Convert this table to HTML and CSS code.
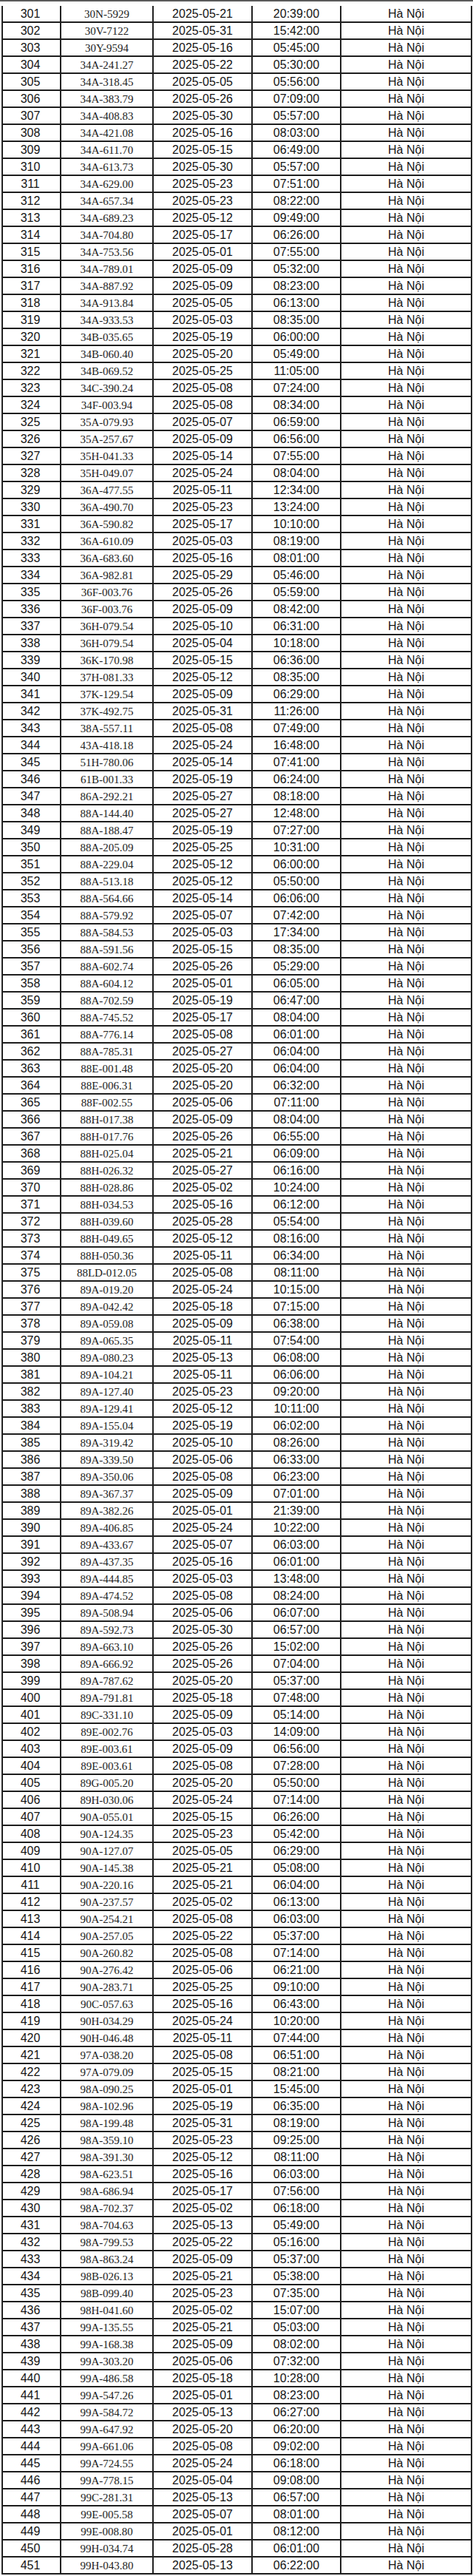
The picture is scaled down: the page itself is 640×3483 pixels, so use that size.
FILE: index.html
```html
<!DOCTYPE html>
<html lang="vi">
<head>
<meta charset="utf-8">
<title>Danh sách phương tiện</title>
<link rel="stylesheet" href="styles.css">
</head>
<body>
<div class="topbar"></div>
<div class="sheet">
<div class="row"><span class="c num">301</span><span class="c plate">30N-5929</span><span class="c">2025-05-21</span><span class="c">20:39:00</span><span class="c city">Hà Nội</span></div>
<div class="row"><span class="c num">302</span><span class="c plate">30V-7122</span><span class="c">2025-05-31</span><span class="c">15:42:00</span><span class="c city">Hà Nội</span></div>
<div class="row"><span class="c num">303</span><span class="c plate">30Y-9594</span><span class="c">2025-05-16</span><span class="c">05:45:00</span><span class="c city">Hà Nội</span></div>
<div class="row"><span class="c num">304</span><span class="c plate">34A-241.27</span><span class="c">2025-05-22</span><span class="c">05:30:00</span><span class="c city">Hà Nội</span></div>
<div class="row"><span class="c num">305</span><span class="c plate">34A-318.45</span><span class="c">2025-05-05</span><span class="c">05:56:00</span><span class="c city">Hà Nội</span></div>
<div class="row"><span class="c num">306</span><span class="c plate">34A-383.79</span><span class="c">2025-05-26</span><span class="c">07:09:00</span><span class="c city">Hà Nội</span></div>
<div class="row"><span class="c num">307</span><span class="c plate">34A-408.83</span><span class="c">2025-05-30</span><span class="c">05:57:00</span><span class="c city">Hà Nội</span></div>
<div class="row"><span class="c num">308</span><span class="c plate">34A-421.08</span><span class="c">2025-05-16</span><span class="c">08:03:00</span><span class="c city">Hà Nội</span></div>
<div class="row"><span class="c num">309</span><span class="c plate">34A-611.70</span><span class="c">2025-05-15</span><span class="c">06:49:00</span><span class="c city">Hà Nội</span></div>
<div class="row"><span class="c num">310</span><span class="c plate">34A-613.73</span><span class="c">2025-05-30</span><span class="c">05:57:00</span><span class="c city">Hà Nội</span></div>
<div class="row"><span class="c num">311</span><span class="c plate">34A-629.00</span><span class="c">2025-05-23</span><span class="c">07:51:00</span><span class="c city">Hà Nội</span></div>
<div class="row"><span class="c num">312</span><span class="c plate">34A-657.34</span><span class="c">2025-05-23</span><span class="c">08:22:00</span><span class="c city">Hà Nội</span></div>
<div class="row"><span class="c num">313</span><span class="c plate">34A-689.23</span><span class="c">2025-05-12</span><span class="c">09:49:00</span><span class="c city">Hà Nội</span></div>
<div class="row"><span class="c num">314</span><span class="c plate">34A-704.80</span><span class="c">2025-05-17</span><span class="c">06:26:00</span><span class="c city">Hà Nội</span></div>
<div class="row"><span class="c num">315</span><span class="c plate">34A-753.56</span><span class="c">2025-05-01</span><span class="c">07:55:00</span><span class="c city">Hà Nội</span></div>
<div class="row"><span class="c num">316</span><span class="c plate">34A-789.01</span><span class="c">2025-05-09</span><span class="c">05:32:00</span><span class="c city">Hà Nội</span></div>
<div class="row"><span class="c num">317</span><span class="c plate">34A-887.92</span><span class="c">2025-05-09</span><span class="c">08:23:00</span><span class="c city">Hà Nội</span></div>
<div class="row"><span class="c num">318</span><span class="c plate">34A-913.84</span><span class="c">2025-05-05</span><span class="c">06:13:00</span><span class="c city">Hà Nội</span></div>
<div class="row"><span class="c num">319</span><span class="c plate">34A-933.53</span><span class="c">2025-05-03</span><span class="c">08:35:00</span><span class="c city">Hà Nội</span></div>
<div class="row"><span class="c num">320</span><span class="c plate">34B-035.65</span><span class="c">2025-05-19</span><span class="c">06:00:00</span><span class="c city">Hà Nội</span></div>
<div class="row"><span class="c num">321</span><span class="c plate">34B-060.40</span><span class="c">2025-05-20</span><span class="c">05:49:00</span><span class="c city">Hà Nội</span></div>
<div class="row"><span class="c num">322</span><span class="c plate">34B-069.52</span><span class="c">2025-05-25</span><span class="c">11:05:00</span><span class="c city">Hà Nội</span></div>
<div class="row"><span class="c num">323</span><span class="c plate">34C-390.24</span><span class="c">2025-05-08</span><span class="c">07:24:00</span><span class="c city">Hà Nội</span></div>
<div class="row"><span class="c num">324</span><span class="c plate">34F-003.94</span><span class="c">2025-05-08</span><span class="c">08:34:00</span><span class="c city">Hà Nội</span></div>
<div class="row"><span class="c num">325</span><span class="c plate">35A-079.93</span><span class="c">2025-05-07</span><span class="c">06:59:00</span><span class="c city">Hà Nội</span></div>
<div class="row"><span class="c num">326</span><span class="c plate">35A-257.67</span><span class="c">2025-05-09</span><span class="c">06:56:00</span><span class="c city">Hà Nội</span></div>
<div class="row"><span class="c num">327</span><span class="c plate">35H-041.33</span><span class="c">2025-05-14</span><span class="c">07:55:00</span><span class="c city">Hà Nội</span></div>
<div class="row"><span class="c num">328</span><span class="c plate">35H-049.07</span><span class="c">2025-05-24</span><span class="c">08:04:00</span><span class="c city">Hà Nội</span></div>
<div class="row"><span class="c num">329</span><span class="c plate">36A-477.55</span><span class="c">2025-05-11</span><span class="c">12:34:00</span><span class="c city">Hà Nội</span></div>
<div class="row"><span class="c num">330</span><span class="c plate">36A-490.70</span><span class="c">2025-05-23</span><span class="c">13:24:00</span><span class="c city">Hà Nội</span></div>
<div class="row"><span class="c num">331</span><span class="c plate">36A-590.82</span><span class="c">2025-05-17</span><span class="c">10:10:00</span><span class="c city">Hà Nội</span></div>
<div class="row"><span class="c num">332</span><span class="c plate">36A-610.09</span><span class="c">2025-05-03</span><span class="c">08:19:00</span><span class="c city">Hà Nội</span></div>
<div class="row"><span class="c num">333</span><span class="c plate">36A-683.60</span><span class="c">2025-05-16</span><span class="c">08:01:00</span><span class="c city">Hà Nội</span></div>
<div class="row"><span class="c num">334</span><span class="c plate">36A-982.81</span><span class="c">2025-05-29</span><span class="c">05:46:00</span><span class="c city">Hà Nội</span></div>
<div class="row"><span class="c num">335</span><span class="c plate">36F-003.76</span><span class="c">2025-05-26</span><span class="c">05:59:00</span><span class="c city">Hà Nội</span></div>
<div class="row"><span class="c num">336</span><span class="c plate">36F-003.76</span><span class="c">2025-05-09</span><span class="c">08:42:00</span><span class="c city">Hà Nội</span></div>
<div class="row"><span class="c num">337</span><span class="c plate">36H-079.54</span><span class="c">2025-05-10</span><span class="c">06:31:00</span><span class="c city">Hà Nội</span></div>
<div class="row"><span class="c num">338</span><span class="c plate">36H-079.54</span><span class="c">2025-05-04</span><span class="c">10:18:00</span><span class="c city">Hà Nội</span></div>
<div class="row"><span class="c num">339</span><span class="c plate">36K-170.98</span><span class="c">2025-05-15</span><span class="c">06:36:00</span><span class="c city">Hà Nội</span></div>
<div class="row"><span class="c num">340</span><span class="c plate">37H-081.33</span><span class="c">2025-05-12</span><span class="c">08:35:00</span><span class="c city">Hà Nội</span></div>
<div class="row"><span class="c num">341</span><span class="c plate">37K-129.54</span><span class="c">2025-05-09</span><span class="c">06:29:00</span><span class="c city">Hà Nội</span></div>
<div class="row"><span class="c num">342</span><span class="c plate">37K-492.75</span><span class="c">2025-05-31</span><span class="c">11:26:00</span><span class="c city">Hà Nội</span></div>
<div class="row"><span class="c num">343</span><span class="c plate">38A-557.11</span><span class="c">2025-05-08</span><span class="c">07:49:00</span><span class="c city">Hà Nội</span></div>
<div class="row"><span class="c num">344</span><span class="c plate">43A-418.18</span><span class="c">2025-05-24</span><span class="c">16:48:00</span><span class="c city">Hà Nội</span></div>
<div class="row"><span class="c num">345</span><span class="c plate">51H-780.06</span><span class="c">2025-05-14</span><span class="c">07:41:00</span><span class="c city">Hà Nội</span></div>
<div class="row"><span class="c num">346</span><span class="c plate">61B-001.33</span><span class="c">2025-05-19</span><span class="c">06:24:00</span><span class="c city">Hà Nội</span></div>
<div class="row"><span class="c num">347</span><span class="c plate">86A-292.21</span><span class="c">2025-05-27</span><span class="c">08:18:00</span><span class="c city">Hà Nội</span></div>
<div class="row"><span class="c num">348</span><span class="c plate">88A-144.40</span><span class="c">2025-05-27</span><span class="c">12:48:00</span><span class="c city">Hà Nội</span></div>
<div class="row"><span class="c num">349</span><span class="c plate">88A-188.47</span><span class="c">2025-05-19</span><span class="c">07:27:00</span><span class="c city">Hà Nội</span></div>
<div class="row"><span class="c num">350</span><span class="c plate">88A-205.09</span><span class="c">2025-05-25</span><span class="c">10:31:00</span><span class="c city">Hà Nội</span></div>
<div class="row"><span class="c num">351</span><span class="c plate">88A-229.04</span><span class="c">2025-05-12</span><span class="c">06:00:00</span><span class="c city">Hà Nội</span></div>
<div class="row"><span class="c num">352</span><span class="c plate">88A-513.18</span><span class="c">2025-05-12</span><span class="c">05:50:00</span><span class="c city">Hà Nội</span></div>
<div class="row"><span class="c num">353</span><span class="c plate">88A-564.66</span><span class="c">2025-05-14</span><span class="c">06:06:00</span><span class="c city">Hà Nội</span></div>
<div class="row"><span class="c num">354</span><span class="c plate">88A-579.92</span><span class="c">2025-05-07</span><span class="c">07:42:00</span><span class="c city">Hà Nội</span></div>
<div class="row"><span class="c num">355</span><span class="c plate">88A-584.53</span><span class="c">2025-05-03</span><span class="c">17:34:00</span><span class="c city">Hà Nội</span></div>
<div class="row"><span class="c num">356</span><span class="c plate">88A-591.56</span><span class="c">2025-05-15</span><span class="c">08:35:00</span><span class="c city">Hà Nội</span></div>
<div class="row"><span class="c num">357</span><span class="c plate">88A-602.74</span><span class="c">2025-05-26</span><span class="c">05:29:00</span><span class="c city">Hà Nội</span></div>
<div class="row"><span class="c num">358</span><span class="c plate">88A-604.12</span><span class="c">2025-05-01</span><span class="c">06:05:00</span><span class="c city">Hà Nội</span></div>
<div class="row"><span class="c num">359</span><span class="c plate">88A-702.59</span><span class="c">2025-05-19</span><span class="c">06:47:00</span><span class="c city">Hà Nội</span></div>
<div class="row"><span class="c num">360</span><span class="c plate">88A-745.52</span><span class="c">2025-05-17</span><span class="c">08:04:00</span><span class="c city">Hà Nội</span></div>
<div class="row"><span class="c num">361</span><span class="c plate">88A-776.14</span><span class="c">2025-05-08</span><span class="c">06:01:00</span><span class="c city">Hà Nội</span></div>
<div class="row"><span class="c num">362</span><span class="c plate">88A-785.31</span><span class="c">2025-05-27</span><span class="c">06:04:00</span><span class="c city">Hà Nội</span></div>
<div class="row"><span class="c num">363</span><span class="c plate">88E-001.48</span><span class="c">2025-05-20</span><span class="c">06:04:00</span><span class="c city">Hà Nội</span></div>
<div class="row"><span class="c num">364</span><span class="c plate">88E-006.31</span><span class="c">2025-05-20</span><span class="c">06:32:00</span><span class="c city">Hà Nội</span></div>
<div class="row"><span class="c num">365</span><span class="c plate">88F-002.55</span><span class="c">2025-05-06</span><span class="c">07:11:00</span><span class="c city">Hà Nội</span></div>
<div class="row"><span class="c num">366</span><span class="c plate">88H-017.38</span><span class="c">2025-05-09</span><span class="c">08:04:00</span><span class="c city">Hà Nội</span></div>
<div class="row"><span class="c num">367</span><span class="c plate">88H-017.76</span><span class="c">2025-05-26</span><span class="c">06:55:00</span><span class="c city">Hà Nội</span></div>
<div class="row"><span class="c num">368</span><span class="c plate">88H-025.04</span><span class="c">2025-05-21</span><span class="c">06:09:00</span><span class="c city">Hà Nội</span></div>
<div class="row"><span class="c num">369</span><span class="c plate">88H-026.32</span><span class="c">2025-05-27</span><span class="c">06:16:00</span><span class="c city">Hà Nội</span></div>
<div class="row"><span class="c num">370</span><span class="c plate">88H-028.86</span><span class="c">2025-05-02</span><span class="c">10:24:00</span><span class="c city">Hà Nội</span></div>
<div class="row"><span class="c num">371</span><span class="c plate">88H-034.53</span><span class="c">2025-05-16</span><span class="c">06:12:00</span><span class="c city">Hà Nội</span></div>
<div class="row"><span class="c num">372</span><span class="c plate">88H-039.60</span><span class="c">2025-05-28</span><span class="c">05:54:00</span><span class="c city">Hà Nội</span></div>
<div class="row"><span class="c num">373</span><span class="c plate">88H-049.65</span><span class="c">2025-05-12</span><span class="c">08:16:00</span><span class="c city">Hà Nội</span></div>
<div class="row"><span class="c num">374</span><span class="c plate">88H-050.36</span><span class="c">2025-05-11</span><span class="c">06:34:00</span><span class="c city">Hà Nội</span></div>
<div class="row"><span class="c num">375</span><span class="c plate">88LD-012.05</span><span class="c">2025-05-08</span><span class="c">08:11:00</span><span class="c city">Hà Nội</span></div>
<div class="row"><span class="c num">376</span><span class="c plate">89A-019.20</span><span class="c">2025-05-24</span><span class="c">10:15:00</span><span class="c city">Hà Nội</span></div>
<div class="row"><span class="c num">377</span><span class="c plate">89A-042.42</span><span class="c">2025-05-18</span><span class="c">07:15:00</span><span class="c city">Hà Nội</span></div>
<div class="row"><span class="c num">378</span><span class="c plate">89A-059.08</span><span class="c">2025-05-09</span><span class="c">06:38:00</span><span class="c city">Hà Nội</span></div>
<div class="row"><span class="c num">379</span><span class="c plate">89A-065.35</span><span class="c">2025-05-11</span><span class="c">07:54:00</span><span class="c city">Hà Nội</span></div>
<div class="row"><span class="c num">380</span><span class="c plate">89A-080.23</span><span class="c">2025-05-13</span><span class="c">06:08:00</span><span class="c city">Hà Nội</span></div>
<div class="row"><span class="c num">381</span><span class="c plate">89A-104.21</span><span class="c">2025-05-11</span><span class="c">06:06:00</span><span class="c city">Hà Nội</span></div>
<div class="row"><span class="c num">382</span><span class="c plate">89A-127.40</span><span class="c">2025-05-23</span><span class="c">09:20:00</span><span class="c city">Hà Nội</span></div>
<div class="row"><span class="c num">383</span><span class="c plate">89A-129.41</span><span class="c">2025-05-12</span><span class="c">10:11:00</span><span class="c city">Hà Nội</span></div>
<div class="row"><span class="c num">384</span><span class="c plate">89A-155.04</span><span class="c">2025-05-19</span><span class="c">06:02:00</span><span class="c city">Hà Nội</span></div>
<div class="row"><span class="c num">385</span><span class="c plate">89A-319.42</span><span class="c">2025-05-10</span><span class="c">08:26:00</span><span class="c city">Hà Nội</span></div>
<div class="row"><span class="c num">386</span><span class="c plate">89A-339.50</span><span class="c">2025-05-06</span><span class="c">06:33:00</span><span class="c city">Hà Nội</span></div>
<div class="row"><span class="c num">387</span><span class="c plate">89A-350.06</span><span class="c">2025-05-08</span><span class="c">06:23:00</span><span class="c city">Hà Nội</span></div>
<div class="row"><span class="c num">388</span><span class="c plate">89A-367.37</span><span class="c">2025-05-09</span><span class="c">07:01:00</span><span class="c city">Hà Nội</span></div>
<div class="row"><span class="c num">389</span><span class="c plate">89A-382.26</span><span class="c">2025-05-01</span><span class="c">21:39:00</span><span class="c city">Hà Nội</span></div>
<div class="row"><span class="c num">390</span><span class="c plate">89A-406.85</span><span class="c">2025-05-24</span><span class="c">10:22:00</span><span class="c city">Hà Nội</span></div>
<div class="row"><span class="c num">391</span><span class="c plate">89A-433.67</span><span class="c">2025-05-07</span><span class="c">06:03:00</span><span class="c city">Hà Nội</span></div>
<div class="row"><span class="c num">392</span><span class="c plate">89A-437.35</span><span class="c">2025-05-16</span><span class="c">06:01:00</span><span class="c city">Hà Nội</span></div>
<div class="row"><span class="c num">393</span><span class="c plate">89A-444.85</span><span class="c">2025-05-03</span><span class="c">13:48:00</span><span class="c city">Hà Nội</span></div>
<div class="row"><span class="c num">394</span><span class="c plate">89A-474.52</span><span class="c">2025-05-08</span><span class="c">08:24:00</span><span class="c city">Hà Nội</span></div>
<div class="row"><span class="c num">395</span><span class="c plate">89A-508.94</span><span class="c">2025-05-06</span><span class="c">06:07:00</span><span class="c city">Hà Nội</span></div>
<div class="row"><span class="c num">396</span><span class="c plate">89A-592.73</span><span class="c">2025-05-30</span><span class="c">06:57:00</span><span class="c city">Hà Nội</span></div>
<div class="row"><span class="c num">397</span><span class="c plate">89A-663.10</span><span class="c">2025-05-26</span><span class="c">15:02:00</span><span class="c city">Hà Nội</span></div>
<div class="row"><span class="c num">398</span><span class="c plate">89A-666.92</span><span class="c">2025-05-26</span><span class="c">07:04:00</span><span class="c city">Hà Nội</span></div>
<div class="row"><span class="c num">399</span><span class="c plate">89A-787.62</span><span class="c">2025-05-20</span><span class="c">05:37:00</span><span class="c city">Hà Nội</span></div>
<div class="row"><span class="c num">400</span><span class="c plate">89A-791.81</span><span class="c">2025-05-18</span><span class="c">07:48:00</span><span class="c city">Hà Nội</span></div>
<div class="row"><span class="c num">401</span><span class="c plate">89C-331.10</span><span class="c">2025-05-09</span><span class="c">05:14:00</span><span class="c city">Hà Nội</span></div>
<div class="row"><span class="c num">402</span><span class="c plate">89E-002.76</span><span class="c">2025-05-03</span><span class="c">14:09:00</span><span class="c city">Hà Nội</span></div>
<div class="row"><span class="c num">403</span><span class="c plate">89E-003.61</span><span class="c">2025-05-09</span><span class="c">06:56:00</span><span class="c city">Hà Nội</span></div>
<div class="row"><span class="c num">404</span><span class="c plate">89E-003.61</span><span class="c">2025-05-08</span><span class="c">07:28:00</span><span class="c city">Hà Nội</span></div>
<div class="row"><span class="c num">405</span><span class="c plate">89G-005.20</span><span class="c">2025-05-20</span><span class="c">05:50:00</span><span class="c city">Hà Nội</span></div>
<div class="row"><span class="c num">406</span><span class="c plate">89H-030.06</span><span class="c">2025-05-24</span><span class="c">07:14:00</span><span class="c city">Hà Nội</span></div>
<div class="row"><span class="c num">407</span><span class="c plate">90A-055.01</span><span class="c">2025-05-15</span><span class="c">06:26:00</span><span class="c city">Hà Nội</span></div>
<div class="row"><span class="c num">408</span><span class="c plate">90A-124.35</span><span class="c">2025-05-23</span><span class="c">05:42:00</span><span class="c city">Hà Nội</span></div>
<div class="row"><span class="c num">409</span><span class="c plate">90A-127.07</span><span class="c">2025-05-05</span><span class="c">06:29:00</span><span class="c city">Hà Nội</span></div>
<div class="row"><span class="c num">410</span><span class="c plate">90A-145.38</span><span class="c">2025-05-21</span><span class="c">05:08:00</span><span class="c city">Hà Nội</span></div>
<div class="row"><span class="c num">411</span><span class="c plate">90A-220.16</span><span class="c">2025-05-21</span><span class="c">06:04:00</span><span class="c city">Hà Nội</span></div>
<div class="row"><span class="c num">412</span><span class="c plate">90A-237.57</span><span class="c">2025-05-02</span><span class="c">06:13:00</span><span class="c city">Hà Nội</span></div>
<div class="row"><span class="c num">413</span><span class="c plate">90A-254.21</span><span class="c">2025-05-08</span><span class="c">06:03:00</span><span class="c city">Hà Nội</span></div>
<div class="row"><span class="c num">414</span><span class="c plate">90A-257.05</span><span class="c">2025-05-22</span><span class="c">05:37:00</span><span class="c city">Hà Nội</span></div>
<div class="row"><span class="c num">415</span><span class="c plate">90A-260.82</span><span class="c">2025-05-08</span><span class="c">07:14:00</span><span class="c city">Hà Nội</span></div>
<div class="row"><span class="c num">416</span><span class="c plate">90A-276.42</span><span class="c">2025-05-06</span><span class="c">06:21:00</span><span class="c city">Hà Nội</span></div>
<div class="row"><span class="c num">417</span><span class="c plate">90A-283.71</span><span class="c">2025-05-25</span><span class="c">09:10:00</span><span class="c city">Hà Nội</span></div>
<div class="row"><span class="c num">418</span><span class="c plate">90C-057.63</span><span class="c">2025-05-16</span><span class="c">06:43:00</span><span class="c city">Hà Nội</span></div>
<div class="row"><span class="c num">419</span><span class="c plate">90H-034.29</span><span class="c">2025-05-24</span><span class="c">10:20:00</span><span class="c city">Hà Nội</span></div>
<div class="row"><span class="c num">420</span><span class="c plate">90H-046.48</span><span class="c">2025-05-11</span><span class="c">07:44:00</span><span class="c city">Hà Nội</span></div>
<div class="row"><span class="c num">421</span><span class="c plate">97A-038.20</span><span class="c">2025-05-08</span><span class="c">06:51:00</span><span class="c city">Hà Nội</span></div>
<div class="row"><span class="c num">422</span><span class="c plate">97A-079.09</span><span class="c">2025-05-15</span><span class="c">08:21:00</span><span class="c city">Hà Nội</span></div>
<div class="row"><span class="c num">423</span><span class="c plate">98A-090.25</span><span class="c">2025-05-01</span><span class="c">15:45:00</span><span class="c city">Hà Nội</span></div>
<div class="row"><span class="c num">424</span><span class="c plate">98A-102.96</span><span class="c">2025-05-19</span><span class="c">06:35:00</span><span class="c city">Hà Nội</span></div>
<div class="row"><span class="c num">425</span><span class="c plate">98A-199.48</span><span class="c">2025-05-31</span><span class="c">08:19:00</span><span class="c city">Hà Nội</span></div>
<div class="row"><span class="c num">426</span><span class="c plate">98A-359.10</span><span class="c">2025-05-23</span><span class="c">09:25:00</span><span class="c city">Hà Nội</span></div>
<div class="row"><span class="c num">427</span><span class="c plate">98A-391.30</span><span class="c">2025-05-12</span><span class="c">08:11:00</span><span class="c city">Hà Nội</span></div>
<div class="row"><span class="c num">428</span><span class="c plate">98A-623.51</span><span class="c">2025-05-16</span><span class="c">06:03:00</span><span class="c city">Hà Nội</span></div>
<div class="row"><span class="c num">429</span><span class="c plate">98A-686.94</span><span class="c">2025-05-17</span><span class="c">07:56:00</span><span class="c city">Hà Nội</span></div>
<div class="row"><span class="c num">430</span><span class="c plate">98A-702.37</span><span class="c">2025-05-02</span><span class="c">06:18:00</span><span class="c city">Hà Nội</span></div>
<div class="row"><span class="c num">431</span><span class="c plate">98A-704.63</span><span class="c">2025-05-13</span><span class="c">05:49:00</span><span class="c city">Hà Nội</span></div>
<div class="row"><span class="c num">432</span><span class="c plate">98A-799.53</span><span class="c">2025-05-22</span><span class="c">05:16:00</span><span class="c city">Hà Nội</span></div>
<div class="row"><span class="c num">433</span><span class="c plate">98A-863.24</span><span class="c">2025-05-09</span><span class="c">05:37:00</span><span class="c city">Hà Nội</span></div>
<div class="row"><span class="c num">434</span><span class="c plate">98B-026.13</span><span class="c">2025-05-21</span><span class="c">05:38:00</span><span class="c city">Hà Nội</span></div>
<div class="row"><span class="c num">435</span><span class="c plate">98B-099.40</span><span class="c">2025-05-23</span><span class="c">07:35:00</span><span class="c city">Hà Nội</span></div>
<div class="row"><span class="c num">436</span><span class="c plate">98H-041.60</span><span class="c">2025-05-02</span><span class="c">15:07:00</span><span class="c city">Hà Nội</span></div>
<div class="row"><span class="c num">437</span><span class="c plate">99A-135.55</span><span class="c">2025-05-21</span><span class="c">05:03:00</span><span class="c city">Hà Nội</span></div>
<div class="row"><span class="c num">438</span><span class="c plate">99A-168.38</span><span class="c">2025-05-09</span><span class="c">08:02:00</span><span class="c city">Hà Nội</span></div>
<div class="row"><span class="c num">439</span><span class="c plate">99A-303.20</span><span class="c">2025-05-06</span><span class="c">07:32:00</span><span class="c city">Hà Nội</span></div>
<div class="row"><span class="c num">440</span><span class="c plate">99A-486.58</span><span class="c">2025-05-18</span><span class="c">10:28:00</span><span class="c city">Hà Nội</span></div>
<div class="row"><span class="c num">441</span><span class="c plate">99A-547.26</span><span class="c">2025-05-01</span><span class="c">08:23:00</span><span class="c city">Hà Nội</span></div>
<div class="row"><span class="c num">442</span><span class="c plate">99A-584.72</span><span class="c">2025-05-13</span><span class="c">06:27:00</span><span class="c city">Hà Nội</span></div>
<div class="row"><span class="c num">443</span><span class="c plate">99A-647.92</span><span class="c">2025-05-20</span><span class="c">06:20:00</span><span class="c city">Hà Nội</span></div>
<div class="row"><span class="c num">444</span><span class="c plate">99A-661.06</span><span class="c">2025-05-08</span><span class="c">09:02:00</span><span class="c city">Hà Nội</span></div>
<div class="row"><span class="c num">445</span><span class="c plate">99A-724.55</span><span class="c">2025-05-24</span><span class="c">06:18:00</span><span class="c city">Hà Nội</span></div>
<div class="row"><span class="c num">446</span><span class="c plate">99A-778.15</span><span class="c">2025-05-04</span><span class="c">09:08:00</span><span class="c city">Hà Nội</span></div>
<div class="row"><span class="c num">447</span><span class="c plate">99C-281.31</span><span class="c">2025-05-13</span><span class="c">06:57:00</span><span class="c city">Hà Nội</span></div>
<div class="row"><span class="c num">448</span><span class="c plate">99E-005.58</span><span class="c">2025-05-07</span><span class="c">08:01:00</span><span class="c city">Hà Nội</span></div>
<div class="row"><span class="c num">449</span><span class="c plate">99E-008.80</span><span class="c">2025-05-01</span><span class="c">08:12:00</span><span class="c city">Hà Nội</span></div>
<div class="row"><span class="c num">450</span><span class="c plate">99H-034.74</span><span class="c">2025-05-28</span><span class="c">06:01:00</span><span class="c city">Hà Nội</span></div>
<div class="row"><span class="c num">451</span><span class="c plate">99H-043.80</span><span class="c">2025-05-13</span><span class="c">06:22:00</span><span class="c city">Hà Nội</span></div>
</div>
</body>
</html>
```

FILE: styles.css
```css
* {
  box-sizing: border-box;
}

html, body {
  margin: 0;
  padding: 0;
  background: #ffffff;
}

body {
  font-family: "Liberation Sans", Arial, sans-serif;
  font-size: 16px;
  color: #151515;
}

.topbar {
  height: 2px;
  background: #5a5a5a;
}

.sheet {
  margin: 6px 0 0 2px;
  width: 637px;
  border-left: 2px solid #222;
  border-right: 2px solid #222;
}

.row {
  display: grid;
  grid-template-columns: 79px 125px 134px 120px 1fr;
  height: 23px;
  border-bottom: 2px solid #1e1e1e;
}

.c {
  display: flex;
  align-items: center;
  justify-content: center;
  border-right: 2px solid #222;
  line-height: 1;
  white-space: nowrap;
  padding-top: 1px;
}

.c.city {
  border-right: none;
}

.num {
  justify-content: center;
  padding-right: 3px;
}

.plate {
  font-family: "Liberation Serif", "Times New Roman", serif;
  font-size: 15px;
  color: #222;
}
```
